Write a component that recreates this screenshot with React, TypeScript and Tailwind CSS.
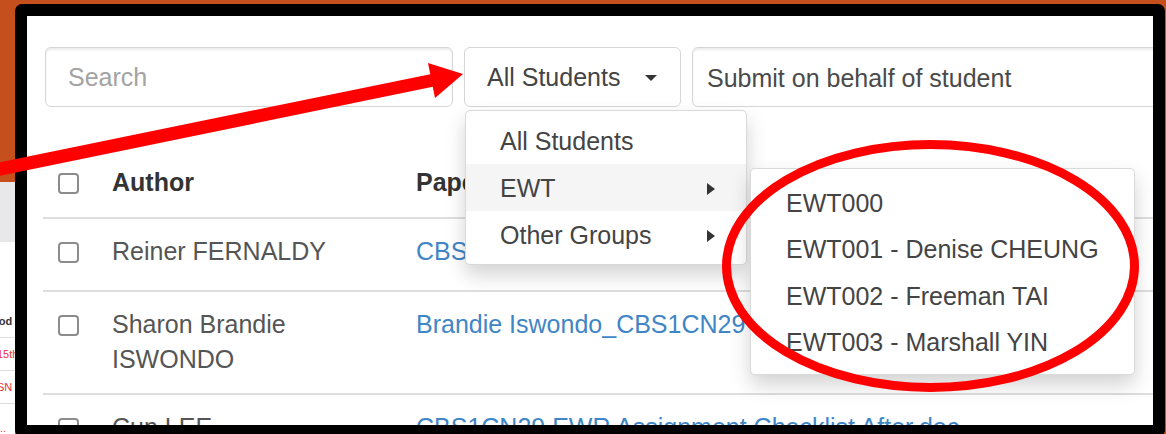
import { useState } from "react";

type Row = {
  author: string[];
  paper: string;
  pb: string;
};

const rows: Row[] = [
  { author: ["Reiner FERNALDY"], paper: "CBS1CN29 EWR Assignment (Reiner).docx", pb: "pb-[21px]" },
  { author: ["Sharon Brandie", "ISWONDO"], paper: "Brandie Iswondo_CBS1CN29 EWR Assignment.docx", pb: "pb-[16px]" },
  { author: ["Cun LEE"], paper: "CBS1CN29 EWR Assignment Checklist After.doc", pb: "pb-[16px]" },
];

const groups = ["All Students", "EWT", "Other Groups"];
const ewtStudents = ["EWT000", "EWT001 - Denise CHEUNG", "EWT002 - Freeman TAI", "EWT003 - Marshall YIN"];

const Checkbox = () => (
  <span className="block w-[21px] h-[21px] mt-[8px] ml-[15px] rounded-[4px] border-2 border-[#8c8c8c] bg-white" />
);

const CaretRight = () => (
  <svg width="8" height="12" viewBox="0 0 8 12" className="shrink-0">
    <polygon points="0,0 8,6 0,12" fill="#333" />
  </svg>
);

// the page peeking out behind the frame on the left
const SidePage = () => (
  <div className="w-[15px] h-full flex flex-col shrink-0">
    <div className="h-[182px] bg-[#c5501d]" />
    <div className="h-[60px] bg-[#e8e8ea]" />
    <div className="flex-1 bg-white pt-[63px] text-[11px] leading-[32px] overflow-hidden">
      <div className="border-b border-[#ddd] font-bold text-[#333] whitespace-nowrap -ml-[22px]">Period</div>
      <div className="border-b border-[#ddd] text-[#e8313a] whitespace-nowrap -ml-[3px]">15th</div>
      <div className="border-b border-[#ddd] text-[#e8313a] whitespace-nowrap -ml-[3px]">SN</div>
      <div className="text-[#e8313a] whitespace-nowrap pt-[8px] -ml-[3px]">...</div>
    </div>
  </div>
);

const GroupMenu = () => (
  <div className="absolute left-[1px] top-[63px] w-[282px] py-[6px] bg-white border border-black/15 rounded-[5px] shadow-[0_10px_20px_rgba(0,0,0,0.175)] z-10">
    {groups.map((g) => (
      <div
        key={g}
        className={`relative h-[47px] flex items-center justify-between pl-[34px] pr-[31px] pt-[2px] text-[#444] ${
          g === "EWT" ? "bg-[#f5f5f5]" : ""
        }`}
      >
        <span>{g}</span>
        {g !== "All Students" && <CaretRight />}
        {g === "EWT" && (
          <div className="absolute left-[284px] top-[4px] w-[385px] pt-[10px] pb-[9px] bg-white border border-black/15 rounded-[5px] shadow-[0_10px_20px_rgba(0,0,0,0.175)]">
            {ewtStudents.map((s) => (
              <div key={s} className="h-[46.5px] flex items-center pl-[35px] pt-[2px] text-[#444] whitespace-nowrap">
                {s}
              </div>
            ))}
          </div>
        )}
      </div>
    ))}
  </div>
);

const Annotations = () => (
  <svg className="absolute inset-0 pointer-events-none z-20" width="1166" height="434" viewBox="0 0 1166 434">
    <line x1="-20" y1="173.1" x2="434" y2="80" stroke="#ff0000" strokeWidth="13" />
    <polygon points="463,74 428,63 435,98" fill="#ff0000" />
    <ellipse cx="930.5" cy="266" rx="204" ry="121.5" fill="none" stroke="#ff0000" strokeWidth="9" />
  </svg>
);

export default function App() {
  const [open] = useState(true);

  return (
    <div className="relative w-[1166px] h-[434px] overflow-hidden bg-[#c5501d] font-['Liberation_Sans',Arial,sans-serif] text-[25px]">
      <div className="flex h-full">
        <SidePage />
        <div className="mt-[4px] w-[1150px] h-[433px] shrink-0 border-[12px] border-black rounded-[7px] bg-white overflow-hidden">
          <div className="h-full pl-[18px] pt-[31px]">
            <div className="flex gap-[11px] h-[60px]">
              <div className="w-[408px] shrink-0 flex items-center pl-[22px] pt-[2px] border border-[#d6d6d6] rounded-[6px] shadow-[inset_0_2px_2px_rgba(0,0,0,0.075)] text-[#a3a3a3]">
                Search
              </div>
              <div className="relative w-[217px] shrink-0">
                <div className="h-full flex items-center justify-between pl-[22px] pr-[23px] pt-[2px] border border-[#d6d6d6] rounded-[6px] text-[#444]">
                  <span>All Students</span>
                  <svg width="12" height="6" viewBox="0 0 12 6">
                    <polygon points="0,0 12,0 6,6" fill="#333" />
                  </svg>
                </div>
                {open && <GroupMenu />}
              </div>
              <div className="w-[520px] shrink-0 flex items-center pl-[14px] pt-[3px] border border-[#d6d6d6] rounded-[6px] shadow-[inset_0_2px_2px_rgba(0,0,0,0.075)] text-[#4a4a4a] whitespace-nowrap">
                Submit on behalf of student
              </div>
            </div>

            <div className="mt-[43px] -ml-[2px] leading-[35px]">
              <div className="flex border-b-2 border-[#dedede] pt-[15px] pb-[17px]">
                <div className="w-[69px] shrink-0">
                  <Checkbox />
                </div>
                <div className="w-[304px] shrink-0 font-bold text-[#333]">Author</div>
                <div className="flex-1 font-bold text-[#333]">Paper</div>
              </div>
              {rows.map((r) => (
                <div key={r.paper} className={`flex border-b-2 border-[#dedede] pt-[15px] ${r.pb}`}>
                  <div className="w-[69px] shrink-0">
                    <Checkbox />
                  </div>
                  <div className="w-[304px] shrink-0 text-[#555]">
                    {r.author.map((a) => (
                      <div key={a}>{a}</div>
                    ))}
                  </div>
                  <div className="flex-1 text-[#3f86c6] whitespace-nowrap">{r.paper}</div>
                </div>
              ))}
            </div>
          </div>
        </div>
      </div>
      <Annotations />
    </div>
  );
}
